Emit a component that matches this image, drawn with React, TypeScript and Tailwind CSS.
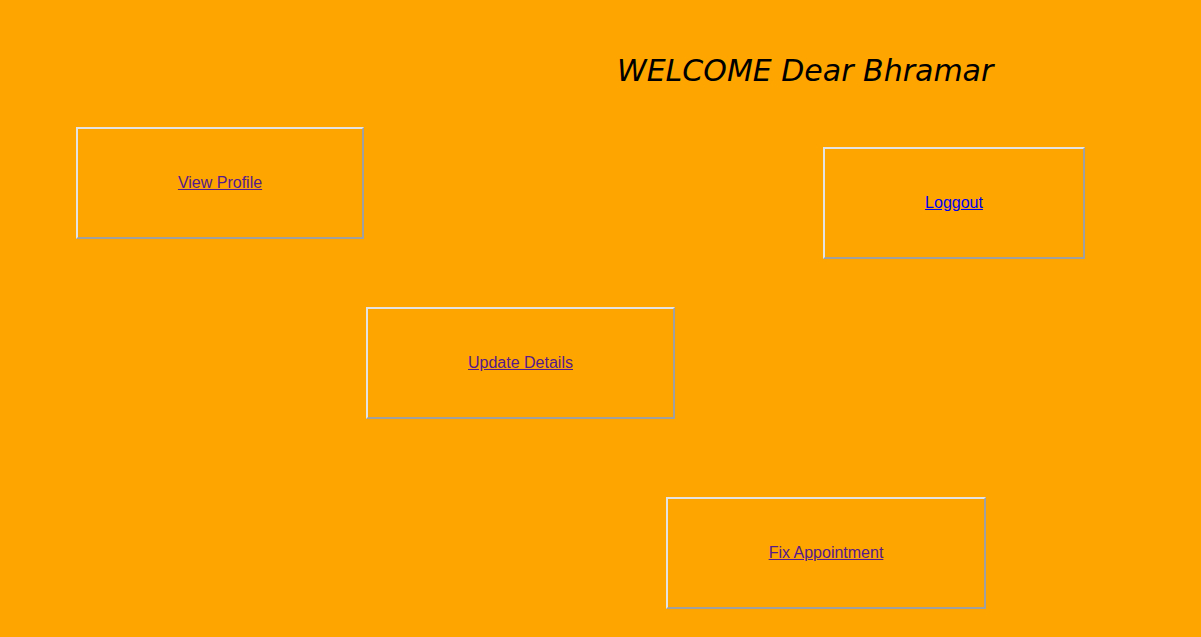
const boxLink = "text-[16px] underline";

function Box({
  label,
  width,
  visited = true,
  className = "",
}: {
  label: string;
  width: string;
  visited?: boolean;
  className?: string;
}) {
  return (
    <div
      className={`flex h-[112px] items-center justify-center border-2 border-t-[#e3e3e3] border-l-[#e3e3e3] border-r-[#a0a0a0] border-b-[#a0a0a0] ${width} ${className}`}
    >
      <a
        href="#"
        className={`${boxLink} ${visited ? "text-[#551a8b]" : "text-[#0000ee]"}`}
      >
        {label}
      </a>
    </div>
  );
}

export default function App() {
  return (
    <div className="min-h-[637px] w-full overflow-hidden bg-[#ffa500] font-['Liberation_Sans',Arial,sans-serif] text-black">
      <h1 className="ml-[617px] pt-[50px] font-['Comic_Sans_MS','DejaVu_Sans',sans-serif] text-[30px] leading-[42px] italic">
        WELCOME Dear Bhramar
      </h1>
      <div className="mt-[35px] flex items-start">
        <Box label="View Profile" width="w-[288px]" className="ml-[76px]" />
        <Box
          label="Loggout"
          width="w-[262px]"
          visited={false}
          className="mt-[20px] ml-[459px]"
        />
      </div>
      <Box label="Update Details" width="w-[309px]" className="mt-[48px] ml-[366px]" />
      <Box label="Fix Appointment" width="w-[320px]" className="mt-[78px] ml-[666px]" />
    </div>
  );
}
